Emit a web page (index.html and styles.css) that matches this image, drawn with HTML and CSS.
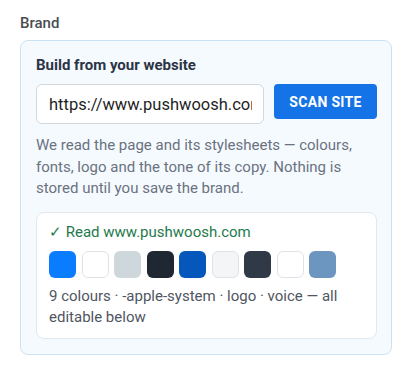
FILE: index.html
```html
<!DOCTYPE html>
<html lang="en">
<head>
    <meta charset="UTF-8">
    <meta name="viewport" content="width=device-width, initial-scale=1.0">
    <title>Brand</title>
    <link rel="stylesheet" href="styles.css">
</head>
<body>
    <div class="page">
        <div class="field-label">Brand</div>
        <div class="brand-box">
            <h3>Build from your website</h3>
            <div class="scan-row">
                <input type="text" class="url-input" value="https://www.pushwoosh.com">
                <button type="button" class="scan-btn">SCAN SITE</button>
            </div>
            <p class="hint">We read the page and its stylesheets — colours, fonts, logo and the tone of its copy. Nothing is stored until you save the brand.</p>
            <div class="result">
                <div class="result-status">✓ Read www.pushwoosh.com</div>
                <div class="swatches">
                    <span class="swatch" style="background:#0a7cff"></span>
                    <span class="swatch light" style="background:#ffffff"></span>
                    <span class="swatch" style="background:#cdd7dc"></span>
                    <span class="swatch" style="background:#1f2732"></span>
                    <span class="swatch" style="background:#0557bb"></span>
                    <span class="swatch light" style="background:#f3f5f7"></span>
                    <span class="swatch" style="background:#2f3a46"></span>
                    <span class="swatch light" style="background:#ffffff"></span>
                    <span class="swatch" style="background:#6c96bf"></span>
                </div>
                <div class="result-summary">9 colours · -apple-system · logo · voice — all editable below</div>
            </div>
        </div>
    </div>
</body>
</html>
```

FILE: styles.css
```css
body {
    margin: 0;
    font-family: Roboto, "Liberation Sans", sans-serif;
    background: #fff;
}

.page {
    padding: 13px 14px 0 20px;
}

.field-label {
    font-size: 15px;
    line-height: 21px;
    font-weight: 500;
    color: #4a4d52;
    margin-bottom: 6px;
}

.brand-box {
    background: #f5faff;
    border: 1px solid #cbe2f3;
    border-radius: 8px;
    padding: 14px 14px 15px 15px;
}

.brand-box h3 {
    margin: 0 0 9px;
    font-size: 15px;
    line-height: 20px;
    font-weight: 700;
    color: #2b3445;
}

.scan-row {
    display: flex;
    align-items: flex-start;
    gap: 10px;
}

.url-input {
    width: 228px;
    height: 40px;
    box-sizing: border-box;
    padding: 0 11px 0 12px;
    border: 1px solid #d3d8de;
    border-radius: 6px;
    background: #fff;
    font-family: Roboto, "Liberation Sans", sans-serif;
    font-size: 16.5px;
    color: #1f1f1f;
}

.scan-btn {
    width: 104px;
    height: 35px;
    border: none;
    border-radius: 4px;
    background: #1473e6;
    color: #fff;
    font-family: Roboto, "Liberation Sans", sans-serif;
    font-size: 14px;
    font-weight: 700;
    letter-spacing: 0.3px;
    cursor: pointer;
}

.hint {
    margin: 11px 0 12px;
    font-size: 15px;
    line-height: 21.5px;
    color: #6b7280;
}

.result {
    background: #fff;
    border: 1px solid #e3e8ee;
    border-radius: 8px;
    padding: 9px 12px 10px 12px;
}

.result-status {
    font-size: 15px;
    line-height: 20px;
    color: #1e7a4c;
}

.swatches {
    display: flex;
    gap: 5.5px;
    margin: 9px 0 8px;
}

.swatch {
    width: 27px;
    height: 27px;
    border-radius: 6px;
    box-sizing: border-box;
}

.swatch.light {
    border: 1px solid #dfe3e8;
}

.result-summary {
    font-size: 15px;
    line-height: 21px;
    color: #4f5661;
}
```
